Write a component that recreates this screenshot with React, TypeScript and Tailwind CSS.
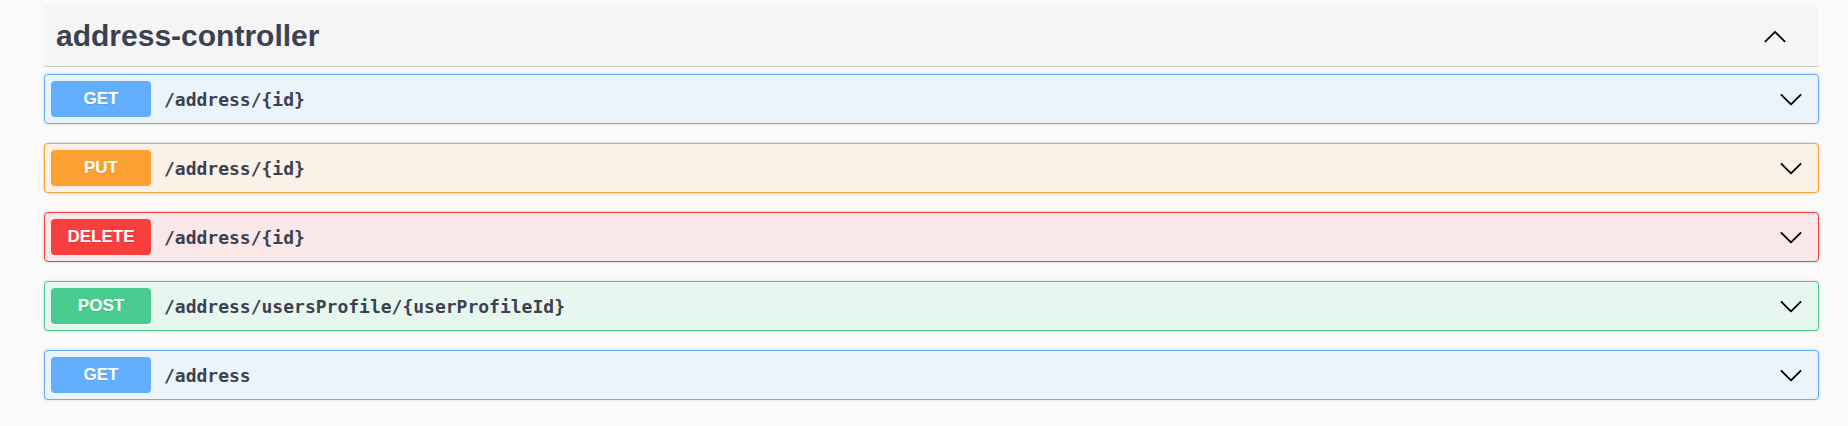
import React from "react";

type Op = { method: string; path: string; box: string; badge: string };

const ops: Op[] = [
  { method: "GET", path: "/address/{id}", box: "bg-[#ebf3fb] border-[#61affe]", badge: "bg-[#61affe]" },
  { method: "PUT", path: "/address/{id}", box: "bg-[#fcf1e6] border-[#fca130]", badge: "bg-[#fca130]" },
  { method: "DELETE", path: "/address/{id}", box: "bg-[#fae7e7] border-[#f93e3e]", badge: "bg-[#f93e3e]" },
  { method: "POST", path: "/address/usersProfile/{userProfileId}", box: "bg-[#e8f6f0] border-[#49cc90]", badge: "bg-[#49cc90]" },
  { method: "GET", path: "/address", box: "bg-[#ebf3fb] border-[#61affe]", badge: "bg-[#61affe]" },
];

function Chevron({ up }: { up?: boolean }) {
  return (
    <svg width="24" height="24" viewBox="0 0 20 20" className="shrink-0">
      <path
        d={up ? "M2 14.4 L10 6.6 L18 14.4" : "M2 6.6 L10 14.4 L18 6.6"}
        fill="none"
        stroke="#000"
        strokeWidth="1.5"
        strokeLinecap="round"
        strokeLinejoin="round"
      />
    </svg>
  );
}

export default function App() {
  return (
    <div className="min-h-[426px] bg-[#fafafa] pl-[44px] pr-[29px] pt-[5px]">
      <div className="flex h-[62px] items-center justify-between border-b border-[#c9cacd] bg-[#f5f5f5] pl-[12px] pr-[32px]">
        <span
          className="text-[30px] font-bold text-[#3b4151]"
          style={{ fontFamily: '"Liberation Sans", Arial, sans-serif' }}
        >
          address-controller
        </span>
        <Chevron up />
      </div>
      <div className="pt-[7px]">
        {ops.map((op, i) => (
          <div
            key={i}
            className={`mb-[19px] flex h-[50px] items-center rounded-[4px] border pl-[6px] pr-[15px] shadow-[0_0_3px_rgba(0,0,0,0.19)] ${op.box}`}
          >
            <div
              className={`flex h-[36px] w-[100px] shrink-0 items-center justify-center rounded-[4px] text-[17px] font-bold text-white [text-shadow:0_1px_0_rgba(0,0,0,0.1)] ${op.badge}`}
              style={{ fontFamily: '"Liberation Sans", Arial, sans-serif' }}
            >
              {op.method}
            </div>
            <span
              className="ml-[13px] flex-1 text-[18px] font-semibold text-[#3b4151]"
              style={{ fontFamily: '"DejaVu Sans Mono", "Liberation Mono", monospace' }}
            >
              {op.path}
            </span>
            <Chevron />
          </div>
        ))}
      </div>
    </div>
  );
}
